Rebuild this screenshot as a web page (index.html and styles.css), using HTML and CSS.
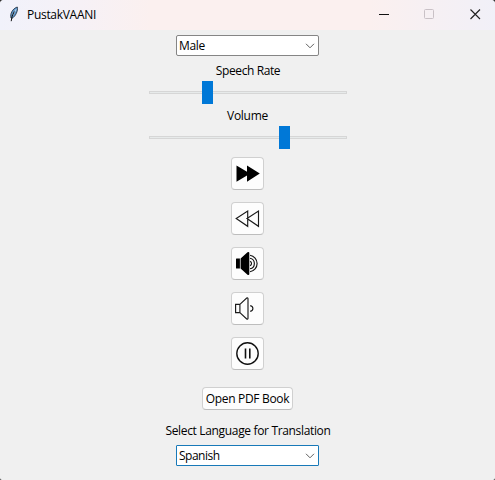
FILE: index.html
```
<!DOCTYPE html>
<html lang="en">
<head>
<meta charset="utf-8">
<title>PustakVAANI</title>
<link rel="stylesheet" href="styles.css">
</head>
<body>
<div class="window">
  <header class="titlebar">
    <svg class="feather" width="12" height="16" viewBox="0 0 12 16">
      <path d="M3 12C1.800 8 4.500 2.500 9.300 1C10.300 4.500 7.500 10.500 4 12.300Z" fill="#5b93c8" stroke="#2b3a49" stroke-width=".9"/>
      <path d="M8.200 3.200L4.800 9" stroke="#b4d2ea" stroke-width="1.100"/>
      <path d="M6.300 5.500Q3.500 10 3.200 15.200" fill="none" stroke="#111" stroke-width="1"/>
    </svg>
    <span class="title">PustakVAANI</span>
    <svg class="controls" width="117" height="12" viewBox="0 0 117 12" fill="none">
      <path d="M1 6.500H11" stroke="#111"/>
      <rect x="46.500" y="1.500" width="9" height="9" rx="1" stroke="#c9c1c6"/>
      <path d="M92.500 1.500L102 11M102 1.500L92.500 11" stroke="#222" stroke-width="1.150"/>
    </svg>
  </header>
  <main class="content">
    <div class="combo">
      <span class="male">Male</span>
      <svg width="10" height="6" viewBox="0 0 10 6"><path d="M1 .8L5 4.800L9 .8" fill="none" stroke="#606060"/></svg>
    </div>
    <div class="label rate-label">Speech Rate</div>
    <div class="slider rate"><div class="thumb"></div></div>
    <div class="label volume-label">Volume</div>
    <div class="slider volume"><div class="thumb"></div></div>
    <div class="buttons">
      <button class="icon-button" aria-label="Faster"><svg width="31" height="31" viewBox="0 0 31 31">
        <path d="M4.500 7.500L15 13.700V7.500L27.800 15.500L15 23.700V17.500L4.500 23.700Z" fill="#000"/>
      </svg></button>
      <button class="icon-button" aria-label="Slower"><svg width="31" height="31" viewBox="0 0 31 31">
        <path d="M15.700 8V23.300L4.200 15.600ZM26.500 8V23.300L15 15.600Z" fill="none" stroke="#1b1b1b" stroke-width="1.150"/>
      </svg></button>
      <button class="icon-button" aria-label="Volume up"><svg width="31" height="31" viewBox="0 0 31 31">
        <path d="M4 11Q4 10.500 4.500 10.500H7.900V20.500H4.500Q4 20.500 4 20ZM8.600 10.500L15.500 4.200Q17.300 3.600 17.300 5V26Q17.300 27.400 15.500 26.800L8.600 20.500Z" fill="#000"/>
        <path d="M18 13.400A2.200 2.200 0 0 1 18 17.600M18 10.200A5.400 5.400 0 0 1 18 20.800M18 7.200A8.400 8.400 0 0 1 18 23.800" fill="none" stroke="#161616" stroke-width="1.150"/>
      </svg></button>
      <button class="icon-button" aria-label="Volume down"><svg width="31" height="31" viewBox="0 0 31 31">
        <path d="M3.600 11.400H7.900V19.600H3.600ZM7.900 11.400L14.700 5Q16 4.400 16 5.800V25.200Q16 26.600 14.700 26L7.900 19.600M18.200 12.600Q20.900 13.200 20.900 15.500Q20.900 17.800 18.200 18.400" fill="none" stroke="#1b1b1b" stroke-width="1.150"/>
      </svg></button>
      <button class="icon-button" aria-label="Pause"><svg width="31" height="31" viewBox="0 0 31 31">
        <circle cx="15.500" cy="15.500" r="10.700" fill="none" stroke="#111" stroke-width="1.400"/>
        <path d="M13.500 10.500V20.500M17.800 10.500V20.500" stroke="#111" stroke-width="1.600"/>
      </svg></button>
    </div>
    <button class="open-button"><span>Open PDF Book</span></button>
    <div class="label language-label">Select Language for Translation</div>
    <div class="combo focused">
      <span class="spanish">Spanish</span>
      <svg width="10" height="6" viewBox="0 0 10 6"><path d="M1 .8L5 4.800L9 .8" fill="none" stroke="#606060"/></svg>
    </div>
  </main>
</div>
</body>
</html>
```
FILE: styles.css
```
* { box-sizing: border-box; }
body {
  margin: 0;
  background: #303030;
  font: 12px/16px "Open Sans", "Noto Sans", sans-serif;
  color: #000;
}
.window {
  width: 495px;
  height: 480px;
  overflow: hidden;
  background: #f0f0f0;
  border-radius: 4px 4px 2px 2px;
}
.titlebar {
  display: flex;
  align-items: center;
  height: 30px;
  padding: 0 0 2px 8px;
  background: linear-gradient(90deg, #f1f2fb 0, #f6f1f6 80px, #fbf0ef 150px, #fbf0ef 370px, #f1f0f8 495px);
}
.title { margin-left: 7px; padding-top: 1px; letter-spacing: -.3px; white-space: nowrap; }
.controls { margin-left: auto; }
.content { display: flex; flex-direction: column; align-items: center; padding-top: 5px; }
.combo {
  display: flex;
  align-items: center;
  justify-content: space-between;
  width: 143px;
  height: 21px;
  padding: 0 3px 0 2px;
  background: #fff;
  border: 1px solid #858585;
  border-radius: 2px;
}
.male { letter-spacing: -.3px; }
.spanish { letter-spacing: -.5px; }
.focused { margin-top: 6px; border-color: #1879b8; border-radius: 1px; }
.label { height: 16px; white-space: nowrap; }
.rate-label { margin-top: 7px; padding-left: 1px; letter-spacing: -.4px; }
.volume-label { margin-top: 4px; letter-spacing: -.3px; }
.slider {
  display: flex;
  align-items: center;
  width: 198px;
  height: 23px;
  margin-top: 2px;
  background: linear-gradient(#e7eaea, #e7eaea) center / 196px 1px no-repeat, linear-gradient(#d6d6d6, #d6d6d6) center / 198px 3px no-repeat;
}
.thumb { width: 11px; height: 23px; background: #0078d7; }
.rate .thumb { margin-left: 53px; }
.volume .thumb { margin-left: 130px; }
.buttons { display: flex; flex-direction: column; gap: 12px; margin-top: 8px; }
button { font: inherit; color: inherit; background: #fdfdfd; border: 1px solid #d0d0d0; border-bottom-color: #bdbdbd; border-radius: 4px; padding: 0; }
.icon-button { width: 33px; height: 33px; }
.icon-button svg { display: block; }
.open-button { width: 91px; height: 23px; margin-top: 17px; letter-spacing: -.33px; white-space: nowrap; }
.language-label { margin-top: 13px; padding-left: 1px; letter-spacing: -.34px; }
```
